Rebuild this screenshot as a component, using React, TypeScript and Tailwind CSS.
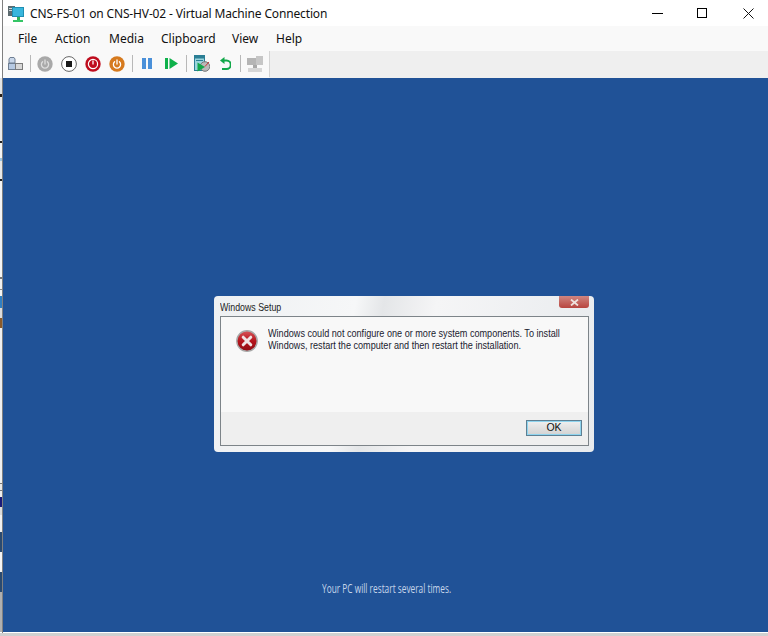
const menuItems = [
  { label: 'File', width: 'w-[37px]' },
  { label: 'Action', width: 'w-[54px]' },
  { label: 'Media', width: 'w-[52px]' },
  { label: 'Clipboard', width: 'w-[71px]' },
  { label: 'View', width: 'w-[44px]' },
  { label: 'Help', width: 'w-[30px]' },
];

// slivers of whatever sits behind the VM window
const behindWindow = [
  'h-[16px] bg-[#e4e4e4]',
  'h-[3px] bg-[#2a2018]',
  'h-[44px] bg-[#ececec]',
  'h-[2px] bg-[#222222]',
  'h-[15px] bg-[#f4f4f4]',
  'h-[3px] bg-[#9cc4e0]',
  'h-[18px] bg-[#e8e8e8]',
  'h-[2px] bg-[#222222]',
  'h-[96px] bg-[#f4f4f4]',
  'h-[2px] bg-[#777777]',
  'h-[10px] bg-[#f0f0f0]',
  'h-[1px] bg-[#888888]',
  'h-[6px] bg-[#f4f4f4]',
  'h-[12px] bg-[#2f7fc4]',
  'h-[10px] bg-[#dcdcdc]',
  'h-[10px] bg-[#8a5a2a]',
  'h-[155px] bg-[#f0f0f0]',
  'h-[1px] bg-[#777777]',
  'h-[6px] bg-[#e8e8e8]',
  'h-[1px] bg-[#777777]',
  'h-[6px] bg-[#eeeeee]',
  'h-[10px] bg-[#1a1a7a]',
  'h-[8px] bg-[#dcdcdc]',
  'h-[17px] bg-[#f0f0f0]',
  'h-[20px] bg-[#2a4a70]',
  'h-[20px] bg-[#f4f4f4]',
  'h-[20px] bg-[#2a4a70]',
  'h-[40px] bg-[#b0b0b0]',
];

function Separator({ className }: { className: string }) {
  return <div className={`h-[17px] w-px bg-[#b8b8b8] ${className}`} />;
}

function PowerGlyph({ color }: { color: string }) {
  return (
    <g fill="none" stroke={color} strokeWidth="1.3" strokeLinecap="round">
      <path d="M5.6 5.8a3.6 3.6 0 1 0 4.8 0" />
      <path d="M8 4v4" />
    </g>
  );
}

function CircleButton({ kind }: { kind: 'off' | 'stop' | 'shutdown' | 'save' }) {
  return (
    <svg width="16" height="16" viewBox="0 0 16 16" className="block">
      {kind === 'off' && (
        <>
          <circle cx="8" cy="8" r="7.7" fill="#a9a9a9" />
          <PowerGlyph color="#dedede" />
        </>
      )}
      {kind === 'stop' && (
        <>
          <circle cx="8" cy="8" r="7.4" fill="#fff" stroke="#666" strokeWidth="1" />
          <rect x="5" y="5" width="6" height="6" fill="#1a1a1a" />
        </>
      )}
      {kind === 'shutdown' && (
        <>
          <circle cx="8" cy="8" r="7.7" fill="#bf0d1e" />
          <circle cx="8" cy="8" r="4.6" fill="none" stroke="#fff" strokeWidth="1.2" />
          <path d="M8 4.5v4" stroke="#fff" strokeWidth="1.3" />
        </>
      )}
      {kind === 'save' && (
        <>
          <circle cx="8" cy="8" r="7.7" fill="#d67a1e" />
          <PowerGlyph color="#fff" />
        </>
      )}
    </svg>
  );
}

function ComputerIcon() {
  return (
    <svg width="17" height="17" viewBox="0 0 17 17" className="mt-[2px] block">
      <rect x="0" y="0" width="7" height="10" fill="#5d6b70" />
      <rect x="1" y="2" width="5" height="1" fill="#cfd8dc" />
      <rect x="1" y="4" width="5" height="1" fill="#cfd8dc" />
      <rect x="4" y="1" width="12" height="10" fill="#1f8fb3" />
      <rect x="5" y="2" width="10" height="8" fill="#38b6dd" />
      <rect x="9" y="11" width="3" height="3" fill="#2fb35a" />
      <rect x="5" y="14" width="10" height="2" fill="#35c566" />
    </svg>
  );
}

function ErrorIcon() {
  return (
    <svg width="22" height="22" viewBox="0 0 22 22" className="block shrink-0">
      <defs>
        <linearGradient id="err" x1="0" y1="0" x2="0" y2="1">
          <stop offset="0" stopColor="#d8555a" />
          <stop offset="0.5" stopColor="#b5141c" />
          <stop offset="1" stopColor="#8f0c12" />
        </linearGradient>
      </defs>
      <circle cx="11" cy="11" r="10.2" fill="url(#err)" stroke="#a8a8a8" strokeWidth="1.4" />
      <path d="M7.2 7.2l7.6 7.6M14.8 7.2l-7.6 7.6" stroke="#efe4e4" strokeWidth="3" strokeLinecap="round" />
    </svg>
  );
}

function Toolbar() {
  return (
    <div className="flex h-[27px] bg-[#efefef]">
      <div className="flex h-[27px] w-[266px] items-center bg-[#f9f9f9] pb-[2px] pl-[5px]">
        <svg width="15" height="13" viewBox="0 0 15 13" className="block">
          <path d="M1 6V2l1-1.5h4l1 1.5v4z" fill="#c9d7ea" stroke="#6f7f93" />
          <rect x="0.5" y="6.5" width="7" height="6" fill="#b6c9e2" stroke="#6f7f93" />
          <rect x="7.5" y="6.5" width="7" height="6" fill="#d8d8d8" stroke="#7b7b7b" />
        </svg>
        <Separator className="ml-[7px] mr-[6px]" />
        <div className="flex items-center gap-[8px]">
          <CircleButton kind="off" />
          <CircleButton kind="stop" />
          <CircleButton kind="shutdown" />
          <CircleButton kind="save" />
        </div>
        <Separator className="ml-[7px]" />
        <svg width="10" height="11" viewBox="0 0 10 11" className="ml-[9px] block">
          <rect x="0" y="0" width="4" height="11" fill="#4a90d9" />
          <rect x="6" y="0" width="4" height="11" fill="#4a90d9" />
        </svg>
        <svg width="13" height="11" viewBox="0 0 13 11" className="ml-[13px] block">
          <rect x="0" y="0" width="3" height="11" fill="#0fb14b" />
          <path d="M4.5 0L13 5.5L4.5 11z" fill="#0fb14b" />
        </svg>
        <Separator className="ml-[8px]" />
        <svg width="16" height="17" viewBox="0 0 16 17" className="ml-[7px] block">
          <rect x="0.5" y="0.5" width="10" height="15" fill="#9bd4dc" stroke="#2b7f95" />
          <rect x="0.5" y="0.5" width="10" height="3" fill="#2b7f95" />
          <rect x="2" y="5" width="7" height="1" fill="#2b7f95" />
          <circle cx="11" cy="11.5" r="4.8" fill="#b9b9b9" stroke="#777" />
          <path d="M3.5 7.5l7.5 4.5-7.5 4.5z" fill="#12a84a" />
          <path d="M11 11.5l4-4.5" stroke="#c33" strokeWidth="1" />
        </svg>
        <svg width="11" height="14" viewBox="0 0 11 14" className="ml-[10px] block">
          <path d="M3.5 3.5H6.5a3.6 3.6 0 0 1 0 8.5H2" fill="none" stroke="#12a84a" strokeWidth="2" />
          <path d="M4.5 0L0 3.5L4.5 7z" fill="#12a84a" />
        </svg>
        <Separator className="ml-[9px]" />
        <svg width="16" height="16" viewBox="0 0 16 16" className="ml-[6px] block">
          <rect x="0" y="2" width="9" height="7" fill="#b5b5b5" />
          <rect x="9" y="0" width="7" height="9" fill="#c6c6c6" />
          <rect x="6" y="9" width="4" height="3" fill="#a8a8a8" />
          <rect x="1" y="12" width="14" height="4" fill="#d6d6d6" />
        </svg>
      </div>
      <div className="h-[26px] w-px bg-[#d4d4d4]" />
    </div>
  );
}

export default function App() {
  return (
    <div className="flex h-[636px] w-[768px] flex-col overflow-hidden bg-white font-['Noto_Sans',sans-serif]">
      <div className="flex h-[633px]">
        <div className="flex w-[3px] flex-col border-r border-[#808080]">
          <div className="h-[78px] bg-white" />
          {behindWindow.map((segment, i) => (
            <div key={i} className={segment} />
          ))}
        </div>
        <div className="flex h-[632px] flex-1 flex-col">
          <div className="flex h-[26px] items-center bg-white pl-[5px]">
            <ComputerIcon />
            <span className="ml-[5px] pt-px text-[12px] tracking-[-0.15px] text-[#111]">
              CNS-FS-01 on CNS-HV-02 - Virtual Machine Connection
            </span>
            <div className="ml-auto flex items-center">
              <div className="h-px w-[11px] bg-black" />
              <div className="ml-[34px] h-[10px] w-[10px] border border-black" />
              <svg width="11" height="11" viewBox="0 0 11 11" className="ml-[36px] mr-[14px] block">
                <path d="M0.5 0.5l10 10M10.5 0.5l-10 10" stroke="#111" strokeWidth="1" />
              </svg>
            </div>
          </div>
          <div className="flex h-[25px] items-center bg-[#f9f9f9] pl-[15px] text-[12px] text-[#111]">
            {menuItems.map((item) => (
              <span key={item.label} className={item.width}>
                {item.label}
              </span>
            ))}
          </div>
          <Toolbar />
          <div className="flex-1 bg-[#205297] pl-[211px] pt-[218px]">
            <div className="relative h-[156px] w-[380px] rounded-[4px] bg-[linear-gradient(100deg,#eef0f2_0%,#f6f7f8_35%,#e4e6e8_42%,#f5f5f6_55%,#e8ebee_100%)] pl-[6px] font-['Liberation_Sans',sans-serif]">
              <div className="flex h-[20px] items-center pt-[3px]">
                <span className="origin-left scale-x-[0.84] whitespace-nowrap text-[10.5px] text-[#222]">Windows Setup</span>
              </div>
              <div className="absolute right-[5px] top-0 flex h-[12px] w-[30px] items-center justify-center rounded-b-[3px] bg-[linear-gradient(#cf8580,#b8453f)]">
                <svg width="9" height="7" viewBox="0 0 9 7" className="block">
                  <path d="M1 0.5l7 6M8 0.5l-7 6" stroke="#eee0dc" strokeWidth="1.8" />
                </svg>
              </div>
              <div className="flex h-[130px] w-[369px] flex-col border border-[#7d8489] bg-[#f8f8f8]">
                <div className="flex flex-1 pl-[15px] pt-[13px]">
                  <ErrorIcon />
                  <p className="-mt-[3px] ml-[10px] origin-left scale-x-[0.867] whitespace-nowrap text-[10.5px] leading-[12px] text-[#1a1a2e]">
                    Windows could not configure one or more system components. To install
                    <br />
                    Windows, restart the computer and then restart the installation.
                  </p>
                </div>
                <div className="flex h-[33px] items-center justify-end bg-[#efefef] pb-px pr-[6px]">
                  <div className="flex h-[16px] w-[56px] items-center justify-center border border-[#5f7f92] bg-[linear-gradient(#f0f0f0,#d2d2d2)] text-[10.5px] text-[#111] shadow-[inset_0_0_0_1px_#8fd4ee]">
                    OK
                  </div>
                </div>
              </div>
            </div>
            <p className="ml-[108px] mt-[129px] origin-left scale-x-[0.693] whitespace-nowrap font-['Open_Sans',sans-serif] text-[12px] leading-[16px] text-[#c6d6ea]">
              Your PC will restart several times.
            </p>
          </div>
        </div>
      </div>
      <div className="flex-1 bg-[#d0d0d0]" />
    </div>
  );
}
